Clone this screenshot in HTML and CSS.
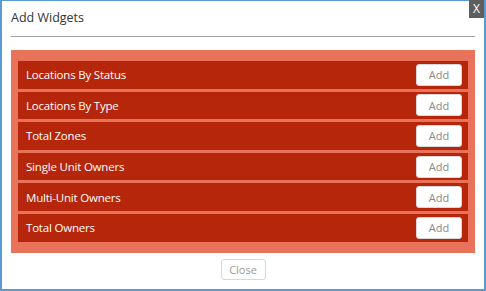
FILE: index.html
```html
<!DOCTYPE html>
<html lang="en">
<head>
  <meta charset="UTF-8">
  <title>Add Widgets</title>
  <link rel="stylesheet" href="styles.css">
</head>
<body>

<div class="dialog">
  <button class="close-x">X</button>
  <h2 class="dialog-title">Add Widgets</h2>

  <div class="widget-list">
    <div class="widget-row"><span>Locations By Status</span><button class="add-btn">Add</button></div>
    <div class="widget-row"><span>Locations By Type</span><button class="add-btn">Add</button></div>
    <div class="widget-row"><span>Total Zones</span><button class="add-btn">Add</button></div>
    <div class="widget-row"><span>Single Unit Owners</span><button class="add-btn">Add</button></div>
    <div class="widget-row"><span>Multi-Unit Owners</span><button class="add-btn">Add</button></div>
    <div class="widget-row"><span>Total Owners</span><button class="add-btn">Add</button></div>
  </div>

  <div class="footer">
    <button class="close-btn">Close</button>
  </div>
</div>

</body>
</html>
```

FILE: styles.css
```css
body {
  margin: 0;
  font-family: "Open Sans", Arial, sans-serif;
  background-color: white;
}

.dialog {
  position: relative;
  width: 486px;
  height: 291px;
  box-sizing: border-box;
  border: 2px solid #5b9bd5;
  border-top-width: 1px;
  background-color: white;
}

.close-x {
  position: absolute;
  top: -1px;
  right: 0;
  width: 15px;
  height: 18px;
  padding: 0;
  border: none;
  background-color: #5e5e5e;
  color: white;
  font-family: "Open Sans", Arial, sans-serif;
  font-size: 12px;
  line-height: 18px;
}

.dialog-title {
  margin: 0 9px;
  padding: 7px 0 8px;
  font-size: 12.5px;
  font-weight: normal;
  line-height: 20px;
  color: #333;
  border-bottom: 1px solid #a0a0a0;
}

.widget-list {
  margin: 13px 9px 0;
  padding: 11px 7px;
  background-color: #e8735a;
  display: flex;
  flex-direction: column;
  gap: 3px;
}

.widget-row {
  height: 27.6px;
  display: flex;
  align-items: center;
  justify-content: space-between;
  padding: 0 6px 0 8px;
  background-color: #b5260b;
  color: white;
  font-size: 11.5px;
  letter-spacing: -0.2px;
}

.add-btn {
  width: 46px;
  height: 22px;
  padding: 0;
  background-color: white;
  border: 1px solid #d8d8d8;
  border-radius: 3px;
  color: #888;
  font-family: "Open Sans", Arial, sans-serif;
  font-size: 11px;
}

.footer {
  display: flex;
  justify-content: center;
  margin-top: 6px;
}

.close-btn {
  width: 45px;
  height: 21px;
  padding: 0;
  background-color: white;
  border: 1px solid #d8d8d8;
  border-radius: 3px;
  color: #999;
  font-family: "Open Sans", Arial, sans-serif;
  font-size: 11px;
}
```
